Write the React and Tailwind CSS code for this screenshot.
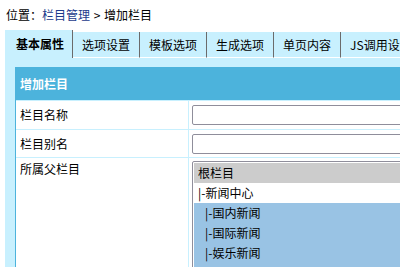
import React from 'react';

const tabs = ['选项设置', '模板选项', '生成选项', '单页内容', 'JS调用设置'];

const options = [
    { label: '根栏目', cls: 'bg-[#cccccc] pl-[4px]' },
    { label: '|-新闻中心', cls: 'bg-white pl-[4px]' },
    { label: '|-国内新闻', cls: 'bg-[#99c3e4] pl-[11px]' },
    { label: '|-国际新闻', cls: 'bg-[#99c3e4] pl-[11px]' },
    { label: '|-娱乐新闻', cls: 'bg-[#99c3e4] pl-[11px]' },
];

const App = () => {
    return (
        <div className="w-[400px] h-[267px] overflow-hidden bg-white text-[12px] text-black font-['Noto_Sans_CJK_SC','Noto_Sans',sans-serif]">
            {/* Breadcrumb */}
            <div className="h-[30px] pl-[6px] flex items-center whitespace-nowrap">
                位置：<span className="text-[#1c3b8c]">栏目管理</span>&nbsp;<span className="px-[1px]">&gt;</span>&nbsp;增加栏目
            </div>

            {/* Tabs */}
            <div className="ml-[5px] flex items-end h-[28px] whitespace-nowrap">
                <div className="h-[28px] w-[68px] shrink-0 bg-[#c8f0fe] border-r border-[#6b6b6b] pl-[11px] flex items-center font-bold">
                    基本属性
                </div>
                {tabs.map((t) => (
                    <div
                        key={t}
                        className="h-[26px] shrink-0 bg-[#c8f0fe] border-r border-[#6b6b6b] border-b border-b-white px-[9px] flex items-center"
                    >
                        {t}
                    </div>
                ))}
            </div>

            {/* Panel */}
            <div className="ml-[5px] h-[300px] bg-[#c8f0fe] pt-[9px] pl-[10px]">
                <div className="w-[520px] border border-[#4cb3dc] bg-white">
                    <div className="h-[32px] bg-[#4cb3dc] text-white font-bold flex items-center pl-[4px]">
                        增加栏目
                    </div>
                    <div className="flex h-[29px] border-t border-[#c8f0fe]">
                        <div className="w-[173px] shrink-0 border-r border-[#c8f0fe] pl-[4px] flex items-center">栏目名称</div>
                        <div className="flex-1 pl-[3px] flex items-center">
                            <input className="w-[300px] h-[20px] border border-[#8f8e9b] rounded-[2px] outline-none" />
                        </div>
                    </div>
                    <div className="flex h-[28px] border-t border-[#c8f0fe]">
                        <div className="w-[173px] shrink-0 border-r border-[#c8f0fe] pl-[4px] flex items-center">栏目别名</div>
                        <div className="flex-1 pl-[3px] flex items-center">
                            <input className="w-[300px] h-[20px] border border-[#8f8e9b] rounded-[2px] outline-none" />
                        </div>
                    </div>
                    <div className="flex border-t border-[#c8f0fe]">
                        <div className="w-[173px] shrink-0 border-r border-[#c8f0fe] pl-[4px] pt-[2px] leading-[18px]">所属父栏目</div>
                        <div className="flex-1 pl-[3px] pt-[3px] pb-[4px]">
                            <div className="w-[300px] border border-[#8f8e9b] rounded-[2px] p-[1px]">
                                {options.map((o) => (
                                    <div key={o.label} className={`h-[20px] leading-[20px] whitespace-nowrap ${o.cls}`}>
                                        {o.label}
                                    </div>
                                ))}
                                <div className="h-[20px] bg-[#99c3e4]" />
                            </div>
                        </div>
                    </div>
                </div>
            </div>
        </div>
    );
};

export default App;
